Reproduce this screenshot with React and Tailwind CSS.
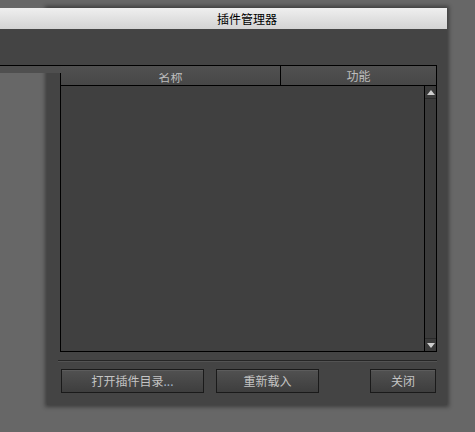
import React from 'react';

const font = { fontFamily: '"Noto Sans CJK SC", "Liberation Sans", sans-serif' };

const Button = ({ className, children }) => (
  <button
    className={`h-[24px] border border-[#1a1a1a] bg-gradient-to-b from-[#515151] to-[#3e3e3e] shadow-[inset_0_1px_0_#5c5c5c] text-[12px] leading-none text-[#c4c4c4] ${className}`}
  >
    {children}
  </button>
);

const PluginManager = () => {
  return (
    <div className="relative w-[475px] h-[432px] bg-[#676767] overflow-hidden" style={font}>
      {/* dialog window */}
      <div className="absolute left-[47px] top-[8px] w-[400px] h-[397px] bg-[#444] shadow-[0_0_4px_2px_rgba(0,0,0,0.4)] flex flex-col">
        <div className="h-[21px] bg-gradient-to-b from-[#efefef] to-[#d3d3d3] flex items-center justify-center text-[12px] text-black">
          插件管理器
        </div>
        <div className="h-[36px]" />

        <div className="pl-[13px] pr-[10px] flex flex-col">
          <div className="h-[287px] border border-black flex flex-col">
            <div className="h-[20px] flex border-b border-black bg-gradient-to-b from-[#515151] to-[#474747] text-[12px] text-[#bdbdbd]">
              <div className="w-[220px] border-r border-black flex justify-center">
                <div className="mt-[7px] h-[11px] overflow-hidden">
                  <div className="-mt-[3px] leading-[14px]">名称</div>
                </div>
              </div>
              <div className="flex-1 flex justify-center items-center leading-none pt-[1px]">功能</div>
            </div>
            <div className="flex-1 flex bg-[#404040]">
              <div className="flex-1" />
              <div className="w-[12px] border-l border-black bg-[#3b3b3b] flex flex-col justify-between">
                <div className="h-[13px] border-b border-[#2a2a2a] flex items-center justify-center">
                  <div className="w-0 h-0 border-l-[4px] border-r-[4px] border-b-[5px] border-l-transparent border-r-transparent border-b-[#cfcfcf]" />
                </div>
                <div className="h-[13px] border-t border-[#2a2a2a] flex items-center justify-center">
                  <div className="w-0 h-0 border-l-[4px] border-r-[4px] border-t-[5px] border-l-transparent border-r-transparent border-t-[#cfcfcf]" />
                </div>
              </div>
            </div>
          </div>

          <div className="mt-[8px] -ml-[2px] h-[2px] border-t border-[#262626] border-b border-b-[#535353]" />

          <div className="mt-[7px] flex items-center">
            <Button className="ml-[1px] w-[143px]">
              打开插件目录<span className="text-[#9fb3c8]">...</span>
            </Button>
            <Button className="ml-[12px] w-[103px]">重新载入</Button>
            <Button className="ml-auto mr-[1px] w-[66px]">关闭</Button>
          </div>
        </div>
      </div>

      {/* strip of the window behind, over the dialog's left edge */}
      <div className="absolute left-0 top-[8px] w-[61px] flex flex-col">
        <div className="h-[21px] bg-gradient-to-b from-[#efefef] to-[#d3d3d3]" />
        <div className="h-[36px] bg-[#444]" />
        <div className="h-[8px] border-t border-black bg-[#4f4f4f]" />
      </div>
    </div>
  );
};

export default function App() {
  return <PluginManager />;
}
